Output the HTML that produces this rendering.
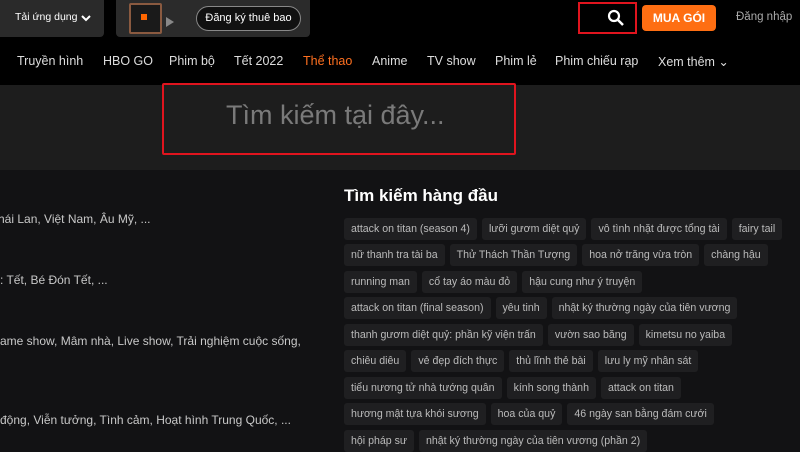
<!DOCTYPE html>
<html><head><meta charset="utf-8"><style>
*{margin:0;padding:0;box-sizing:border-box}
body{width:800px;height:450px;overflow:hidden;background:#121214;font-family:"Liberation Sans",sans-serif;position:relative;color:#ccc}
.a{position:absolute}
.hdr{left:0;top:0;width:800px;height:85px;background:#000}
.band{left:0;top:85px;width:800px;height:85px;background:#1d1d1d}
.nav{top:54px;font-size:12.5px;color:#ddd;white-space:nowrap}
.row{position:absolute;left:344px;display:flex;gap:5px}
.t{background:#1f1f21;border-radius:3px;height:22px;line-height:22px;padding:0 7px;font-size:10.6px;color:#bbb;white-space:nowrap}
.lt{left:0;font-size:12px;color:#c8c8c8;white-space:nowrap}
</style></head><body>
<div class="a hdr"></div>
<div class="a" style="left:0;top:0;width:104px;height:37px;background:#2a2a2a;border-radius:0 0 4px 0"></div>
<div class="a" style="left:15px;top:11px;font-size:10.5px;color:#fff">Tải ứng dụng</div>
<svg class="a" style="left:80px;top:13px" width="12" height="10"><path d="M2 3l4 4 4-4" stroke="#fff" stroke-width="2" fill="none"/></svg>
<div class="a" style="left:116px;top:0;width:194px;height:37px;background:#2b2b2b;border-radius:0 0 4px 4px"></div>
<div class="a" style="left:129px;top:3px;width:33px;height:31px;background:#1a1a1a;border:2px solid #8a5a40;border-radius:2px"></div>
<div class="a" style="left:141px;top:14px;width:6px;height:6px;background:#f60"></div>
<div class="a" style="left:166px;top:17px;width:0;height:0;border-left:8px solid #888;border-top:5px solid transparent;border-bottom:5px solid transparent"></div>
<div class="a" style="left:196px;top:6px;width:105px;height:25px;border:1.5px solid #888;border-radius:13px;background:#111;color:#fff;font-size:11px;line-height:22px;text-align:center">Đăng ký thuê bao</div>
<div class="a" style="left:578px;top:2px;width:59px;height:32px;border:2px solid #e0141e"></div>
<svg class="a" style="left:607px;top:9px" width="18" height="18"><circle cx="7" cy="7" r="5" stroke="#fff" stroke-width="2.2" fill="none"/><path d="M11 11l5 5" stroke="#fff" stroke-width="2.5"/></svg>
<div class="a" style="left:642px;top:5px;width:74px;height:26px;background:#fe6e12;border-radius:4px;color:#fff;font-size:12px;font-weight:bold;line-height:26px;text-align:center">MUA GÓI</div>
<div class="a" style="left:736px;top:11px;font-size:11.5px;color:#aaa">Đăng nhập</div>
<div class="a nav" style="left:17px">Truyền hình</div>
<div class="a nav" style="left:103px">HBO GO</div>
<div class="a nav" style="left:169px">Phim bộ</div>
<div class="a nav" style="left:234px">Tết 2022</div>
<div class="a nav" style="left:303px;color:#fe7020">Thể thao</div>
<div class="a nav" style="left:372px">Anime</div>
<div class="a nav" style="left:427px">TV show</div>
<div class="a nav" style="left:495px">Phim lẻ</div>
<div class="a nav" style="left:555px">Phim chiếu rạp</div>
<div class="a nav" style="left:658px">Xem thêm ⌄</div>
<div class="a band"></div>
<div class="a" style="left:162px;top:83px;width:354px;height:72px;border:2px solid #e0141e;border-radius:2px"></div>
<div class="a" style="left:226px;top:100px;font-size:27px;color:#7a7a7a">Tìm kiếm tại đây...</div>
<div class="a lt" style="left:-2px;top:212px">hái Lan, Việt Nam, Âu Mỹ, ...</div>
<div class="a lt" style="top:273px">: Tết, Bé Đón Tết, ...</div>
<div class="a lt" style="top:334px">ame show, Mâm nhà, Live show, Trải nghiệm cuộc sống,</div>
<div class="a lt" style="top:413px">động, Viễn tưởng, Tình cảm, Hoạt hình Trung Quốc, ...</div>
<div class="a" style="left:344px;top:186px;font-size:17px;font-weight:bold;color:#fff">Tìm kiếm hàng đầu</div>
<div class="row" style="top:218px"><span class="t">attack on titan (season 4)</span><span class="t">lưỡi gươm diệt quỷ</span><span class="t">vô tình nhặt được tổng tài</span><span class="t">fairy tail</span></div>
<div class="row" style="top:244px"><span class="t">nữ thanh tra tài ba</span><span class="t">Thử Thách Thần Tượng</span><span class="t">hoa nở trăng vừa tròn</span><span class="t">chàng hậu</span></div>
<div class="row" style="top:271px"><span class="t">running man</span><span class="t">cổ tay áo màu đỏ</span><span class="t">hậu cung như ý truyện</span></div>
<div class="row" style="top:297px"><span class="t">attack on titan (final season)</span><span class="t">yêu tinh</span><span class="t">nhật ký thường ngày của tiên vương</span></div>
<div class="row" style="top:324px"><span class="t">thanh gươm diệt quỷ: phần kỹ viện trấn</span><span class="t">vườn sao băng</span><span class="t">kimetsu no yaiba</span></div>
<div class="row" style="top:350px"><span class="t">chiêu diêu</span><span class="t">vẻ đẹp đích thực</span><span class="t">thủ lĩnh thẻ bài</span><span class="t">lưu ly mỹ nhân sát</span></div>
<div class="row" style="top:377px"><span class="t">tiểu nương tử nhà tướng quân</span><span class="t">kính song thành</span><span class="t">attack on titan</span></div>
<div class="row" style="top:403px"><span class="t">hương mật tựa khói sương</span><span class="t">hoa của quỷ</span><span class="t">46 ngày san bằng đám cưới</span></div>
<div class="row" style="top:430px"><span class="t">hội pháp sư</span><span class="t">nhật ký thường ngày của tiên vương (phần 2)</span></div>
</body></html>
